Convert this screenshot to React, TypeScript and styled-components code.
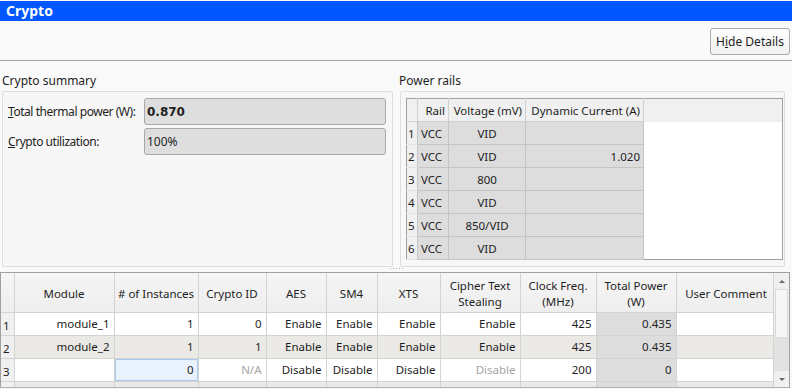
import React from 'react'
import styled, { createGlobalStyle } from 'styled-components'

const GlobalStyle = createGlobalStyle`
  html, body {
    margin: 0;
    padding: 0;
    background: #f9f9f9;
  }
  body {
    font-family: "Noto Sans", "Open Sans", sans-serif;
    font-size: 11.5px;
    color: #1e1e1e;
  }
`

const rails = [
  { rail: 'VCC', voltage: 'VID', current: '' },
  { rail: 'VCC', voltage: 'VID', current: '1.020' },
  { rail: 'VCC', voltage: '800', current: '' },
  { rail: 'VCC', voltage: 'VID', current: '' },
  { rail: 'VCC', voltage: '850/VID', current: '' },
  { rail: 'VCC', voltage: 'VID', current: '' },
]

const columns = [
  { title: 'Module', width: 100 },
  { title: '# of Instances', width: 84 },
  { title: 'Crypto ID', width: 68 },
  { title: 'AES', width: 60 },
  { title: 'SM4', width: 51 },
  { title: 'XTS', width: 63 },
  { title: 'Cipher Text Stealing', width: 80 },
  { title: 'Clock Freq. (MHz)', width: 76 },
  { title: 'Total Power (W)', width: 80 },
  { title: 'User Comment', width: 100 },
]

const modules = [
  { name: 'module_1', inst: '1', id: '0', aes: 'Enable', sm4: 'Enable', xts: 'Enable', cts: 'Enable', clk: '425', power: '0.435' },
  { name: 'module_2', inst: '1', id: '1', aes: 'Enable', sm4: 'Enable', xts: 'Enable', cts: 'Enable', clk: '425', power: '0.435' },
  { name: '', inst: '0', id: 'N/A', aes: 'Disable', sm4: 'Disable', xts: 'Disable', cts: 'Disable', clk: '200', power: '0', empty: true },
  { name: '', inst: '', id: '', aes: '', sm4: '', xts: '', cts: '', clk: '', power: '' },
]

function App() {
  return (
    <Window>
      <GlobalStyle />
      <TitleBar>Crypto</TitleBar>
      <Toolbar>
        <PushButton>H<u>i</u>de Details</PushButton>
      </Toolbar>
      <TopArea>
        <Panel $width={393} $left={0}>
          <PanelTitle $indent={2}>Crypto summary</PanelTitle>
          <GroupBox $pad="6px 6px 6px 5px" $ml={2}>
            <FormGrid>
              <FieldLabel><u>T</u>otal thermal power (W):</FieldLabel>
              <Field $strong>0.870</Field>
              <FieldLabel><u>C</u>rypto utilization:</FieldLabel>
              <Field>100%</Field>
            </FormGrid>
          </GroupBox>
        </Panel>
        <Panel $width={386} $left={6}>
          <PanelTitle $indent={0}>Power rails</PanelTitle>
          <GroupBox $pad="6px 2px 6px 5px" $ml={1}>
            <RailTable>
              <thead>
                <tr>
                  <RailHead $w={11} />
                  <RailHead $w={31}>Rail</RailHead>
                  <RailHead $w={77}>Voltage (mV)</RailHead>
                  <RailHead $w={118}>Dynamic Current (A)</RailHead>
                  <RailHead $blank />
                </tr>
              </thead>
              <tbody>
                {rails.map((r, i) => (
                  <tr key={i}>
                    <RailNum>{i + 1}</RailNum>
                    <RailCell $align="left">{r.rail}</RailCell>
                    <RailCell $align="center">{r.voltage}</RailCell>
                    <RailCell $align="right">{r.current}</RailCell>
                    <RailFill />
                  </tr>
                ))}
              </tbody>
            </RailTable>
          </GroupBox>
        </Panel>
      </TopArea>
      <Splitter>
        <SplitterDots />
      </Splitter>
      <GridFrame>
        <GridScroll>
          <ModuleTable>
            <thead>
              <tr>
                <HeadCell $w={13} />
                {columns.map(c => (
                  <HeadCell key={c.title} $w={c.width}>{c.title}</HeadCell>
                ))}
              </tr>
            </thead>
            <tbody>
              {modules.map((m, i) => (
                <BodyRow key={i} $alt={i % 2 === 1}>
                  <NumCell>{i < 3 ? i + 1 : ''}</NumCell>
                  <Cell>{m.name}</Cell>
                  <Cell $selected={m.empty}>{m.inst}</Cell>
                  <Cell $muted={m.empty}>{m.id}</Cell>
                  <Cell>{m.aes}</Cell>
                  <Cell>{m.sm4}</Cell>
                  <Cell>{m.xts}</Cell>
                  <Cell $muted={m.empty}>{m.cts}</Cell>
                  <Cell>{m.clk}</Cell>
                  <Cell $readonly>{m.power}</Cell>
                  <Cell />
                </BodyRow>
              ))}
            </tbody>
          </ModuleTable>
        </GridScroll>
        <ScrollBar>
          <ScrollArrow $up />
          <ScrollHandle />
          <ScrollTrack />
          <ScrollArrow />
        </ScrollBar>
      </GridFrame>
    </Window>
  )
}

export default App

const Window = styled.div`
  width: 792px;
  height: 389px;
  overflow: hidden;
  display: flex;
  flex-direction: column;
  background: #f9f9f9;
`
const TitleBar = styled.div`
  margin-top: 1px;
  height: 20px;
  line-height: 20px;
  background: #0057ff;
  color: #fff;
  font-weight: bold;
  font-size: 14px;
  padding-left: 6px;
`
const Toolbar = styled.div`
  height: 39px;
  display: flex;
  align-items: center;
  justify-content: flex-end;
  padding-right: 2px;
  border-bottom: 1px solid #a4a4a4;
  background: #fafafa;
`
const PushButton = styled.button`
  width: 80px;
  height: 27px;
  margin-top: 2px;
  border: 1px solid #ababab;
  border-radius: 3px;
  background: linear-gradient(#fefefe, #f1f1f1);
  font-family: inherit;
  font-size: 12px;
  color: #1e1e1e;
  padding: 0;
  white-space: nowrap;
  u { text-decoration-thickness: 1px; }
`
const TopArea = styled.div`
  display: flex;
  height: 206px;
`
const Panel = styled.div<{ $width: number; $left: number }>`
  width: ${p => p.$width}px;
  margin-left: ${p => p.$left}px;
  display: flex;
  flex-direction: column;
`
const PanelTitle = styled.div<{ $indent: number }>`
  height: 30px;
  display: flex;
  align-items: flex-end;
  padding-left: ${p => p.$indent}px;
  padding-bottom: 2px;
  box-sizing: border-box;
  line-height: 16px;
  font-size: 12px;
  color: #1e1e1e;
`
const GroupBox = styled.div<{ $pad: string; $ml: number }>`
  flex: 1;
  margin-left: ${p => p.$ml}px;
  border: 1px solid #dedede;
  border-radius: 2px;
  background: #f7f7f7;
  padding: ${p => p.$pad};
`
const FormGrid = styled.div`
  display: grid;
  grid-template-columns: 136px 1fr;
  row-gap: 3px;
  align-items: center;
`
const FieldLabel = styled.div`
  white-space: nowrap;
  font-size: 12px;
  letter-spacing: -0.45px;
  color: #1e1e1e;
`
const Field = styled.div<{ $strong?: boolean }>`
  height: 27px;
  box-sizing: border-box;
  border: 1px solid #a8a8a8;
  border-radius: 3px;
  background: #dedede;
  display: flex;
  align-items: center;
  padding-left: 2px;
  font-family: ${p => (p.$strong ? '"DejaVu Sans", sans-serif' : 'inherit')};
  font-weight: ${p => (p.$strong ? 'bold' : 'normal')};
  font-size: 12px;
  color: #1e1e1e;
`
const RailTable = styled.table`
  width: 377px;
  height: 162px;
  border-collapse: collapse;
  table-layout: fixed;
  background: #fff;
  border: 1px solid #a0a0a0;
`
const RailHead = styled.th<{ $w?: number; $blank?: boolean }>`
  ${p => (p.$w ? `width: ${p.$w}px;` : '')}
  box-sizing: border-box;
  height: 23px;
  padding: 0 3px 0 0;
  background: #f0f0f0;
  font-weight: normal;
  text-align: right;
  white-space: nowrap;
  overflow: hidden;
  border-right: ${p => (p.$blank ? 'none' : '1px solid #d0d0d0')};
  border-bottom: ${p => (p.$blank ? 'none' : '1px solid #d0d0d0')};
`
const RailNum = styled.td`
  height: 22px;
  padding: 0 0 0 1px;
  background: #f0f0f0;
  border-right: 1px solid #c4c4c4;
  border-bottom: 1px solid #e2e2e2;
`
const RailCell = styled.td<{ $align: 'left' | 'center' | 'right' }>`
  padding: 0 3px;
  background: #dddddd;
  text-align: ${p => p.$align};
  border-right: 1px solid #c4c4c4;
  border-bottom: 1px solid #c4c4c4;
  white-space: nowrap;
`
const RailFill = styled.td`
  background: #fff;
`
const Splitter = styled.div`
  height: 5px;
`
const SplitterDots = styled.div`
  margin: 1px 0 0 389px;
  width: 16px;
  height: 1px;
  background-image: radial-gradient(circle, #b0b0b0 0.7px, transparent 0.8px);
  background-size: 3px 1px;
`
const GridFrame = styled.div`
  width: 790px;
  height: 116px;
  box-sizing: border-box;
  border: 1px solid #a0a0a0;
  border-bottom: 1px solid #b0b0b0;
  display: flex;
  background: #fff;
  overflow: hidden;
`
const GridScroll = styled.div`
  width: 774px;
  overflow: hidden;
`
const ModuleTable = styled.table`
  border-collapse: collapse;
  table-layout: fixed;
  width: 774px;
`
const HeadCell = styled.th<{ $w?: number }>`
  width: ${p => p.$w}px;
  height: 39px;
  padding: 3px 2px 0;
  box-sizing: border-box;
  background: linear-gradient(#f5f5f5, #eeeeee);
  font-weight: normal;
  line-height: 16px;
  text-align: center;
  color: #1e1e1e;
  border-right: 1px solid #d3d3d3;
  border-bottom: 1px solid #d3d3d3;
`
const BodyRow = styled.tr<{ $alt: boolean }>`
  height: 23px;
  background: ${p => (p.$alt ? '#ebe9e6' : '#ffffff')};
`
const NumCell = styled.td`
  padding: 3px 0 0 2px;
  background: #f0f0f0;
  border-right: 1px solid #d3d3d3;
  border-bottom: 1px solid #d3d3d3;
`
const Cell = styled.td<{ $muted?: boolean; $readonly?: boolean; $selected?: boolean }>`
  padding: 0 4px;
  text-align: right;
  white-space: nowrap;
  color: ${p => (p.$muted ? '#a4a4a4' : '#1e1e1e')};
  background: ${p => (p.$readonly ? '#dddddd' : p.$selected ? '#e9f2fc' : 'transparent')};
  border-right: 1px solid #d3d3d3;
  border-bottom: 1px solid #d3d3d3;
  box-shadow: ${p => (p.$selected ? 'inset 0 0 0 1px #a9cbef' : 'none')};
`
const ScrollBar = styled.div`
  width: 15px;
  border-left: 1px solid #d3d3d3;
  display: flex;
  flex-direction: column;
  background: #f0f0f0;
`
const ScrollArrow = styled.div<{ $up?: boolean }>`
  height: 16px;
  display: flex;
  align-items: center;
  justify-content: center;
  &::after {
    content: '';
    border-left: 3px solid transparent;
    border-right: 3px solid transparent;
    ${p => (p.$up ? 'border-bottom: 3px solid #6a6a6a;' : 'border-top: 3px solid #6a6a6a;')}
  }
`
const ScrollHandle = styled.div`
  height: 49px;
  margin: 0 1px;
  box-sizing: border-box;
  border: 1px solid #dadada;
  background: #f6f6f6;
`
const ScrollTrack = styled.div`
  flex: 1;
  background: #e2e2e2;
`
